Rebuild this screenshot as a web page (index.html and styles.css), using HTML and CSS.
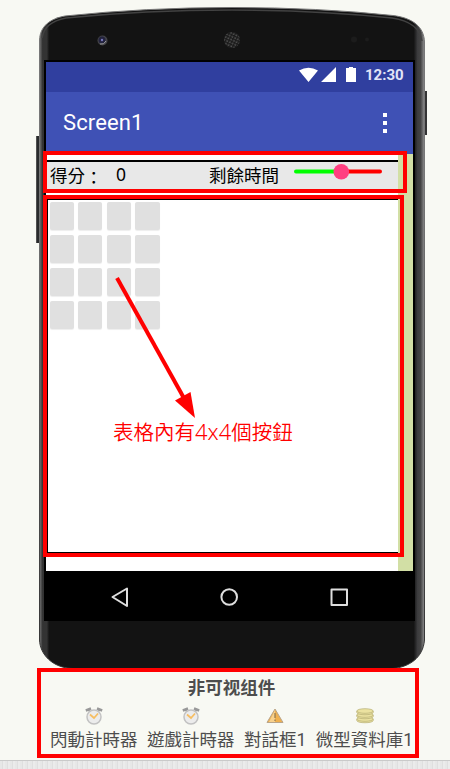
FILE: index.html
```html
<!DOCTYPE html>
<html lang="zh-Hant">
<head>
<meta charset="utf-8">
<title>Screen1</title>
<link rel="stylesheet" href="styles.css">
</head>
<body>
<main class="viewer">
  <section class="phone">
    <svg class="shell" viewBox="0 0 450 680" aria-hidden="true">
      <defs>
        <linearGradient id="edge"><stop offset="0" stop-color="#777"/><stop offset=".008" stop-color="#333"/><stop offset=".019" stop-color="#333"/><stop offset=".025" stop-color="#131313"/><stop offset=".972" stop-color="#131313"/><stop offset=".982" stop-color="#3c3c3e"/><stop offset=".99" stop-color="#444"/><stop offset="1" stop-color="#909090"/></linearGradient>
        <linearGradient id="rim" x2="0" y2="1"><stop offset="0" stop-color="#777"/><stop offset=".25" stop-color="#777"/><stop offset="1" stop-color="#333"/></linearGradient>
        <pattern id="mesh" width="3" height="3" patternUnits="userSpaceOnUse" patternTransform="rotate(25)"><rect width="3" height="3" fill="#1b1b1b"/><circle cx="1.2" cy="1.2" r=".9" fill="#555"/></pattern>
      </defs>
      <path d="M36 136h4v107h-4z" fill="#292b2c"/><path d="M36 136h1v107h-1z" fill="#505050"/>
      <path d="M424 91h3v44h-3z" fill="#343434"/>
      <path d="M39.500 40C40 27 49 19 65 16Q145 7.500 232 7.500T393 15.500C413 18 424 27 424.500 42V640C423 658 409 667 393 668.500H73C52 668 40 654 39.500 640Z" fill="url(#edge)" stroke="url(#rim)" stroke-width="1"/>
      <path d="M42 38C44 27 51 21 66 18Q145 10 232 10T392 18C412 21 420 29 422 41" fill="none" stroke="#424242" stroke-width="1.500"/>
      <circle cx="102.500" cy="40.500" r="5" fill="#444448"/><circle cx="102" cy="40" r="3.500" fill="#23233e"/><circle cx="102" cy="40" r="1.200" fill="#7777ba"/><path d="M100 44q4 1 6-3" stroke="#999" fill="none"/>
      <circle cx="232" cy="40" r="8" fill="url(#mesh)"/>
      <circle cx="354" cy="39.500" r="3" fill="#1c1c1c"/><circle cx="367" cy="39.500" r="2" fill="#1c1c1c"/>
    </svg>
    <div class="screen">
      <header class="status">
        <svg width="60" height="18" viewBox="0 0 60 18" fill="#fff" aria-hidden="true"><path d="M1 4.500Q10.500-1 20 4.500L10.500 16ZM23 16L38 1v15ZM48 2h3V1h4v1h3v14H48Z"/></svg>
        <span class="clock">12:30</span>
      </header>
      <div class="appbar"><span class="title">Screen1</span><span class="dots"><i></i><i></i><i></i></span></div>
      <div class="content">
        <div class="form">
          <div class="score-row">
            <span class="score-label">得分<span class="colon">：</span></span><span class="score">0</span><span class="time-label">剩餘時間</span>
            <svg class="slider" width="88" height="18" viewBox="0 0 88 18" aria-hidden="true"><path d="M2 8.500h44" stroke="#0f0" stroke-width="4" stroke-linecap="round"/><path d="M46 8.500h40" stroke="red" stroke-width="4" stroke-linecap="round"/><circle cx="47.300" cy="8.800" r="7.800" fill="#ff4081"/></svg>
          </div>
          <div class="table">
            <b></b><b></b><b></b><b></b><b></b><b></b><b></b><b></b>
            <b></b><b></b><b></b><b></b><b></b><b></b><b></b><b></b>
          </div>
        </div>
      </div>
      <nav class="navbar">
        <svg width="371" height="50" viewBox="0 0 371 50" fill="none" stroke="#dedede" stroke-width="2" stroke-linejoin="round" aria-hidden="true"><path d="M68.500 26L83 17.500v17.500Z"/><circle cx="185.200" cy="26" r="7.800"/><path d="M287.500 18.500h15.500v15.500h-15.500z"/></svg>
      </nav>
    </div>
  </section>

  <section class="components">
    <h2>非可视组件</h2>
    <div class="list">
      <div class="item"><svg class="icon" viewBox="0 0 18 18"><use href="#alarm"/></svg><span>閃動計時器</span></div>
      <div class="item"><svg class="icon" viewBox="0 0 18 18"><use href="#alarm"/></svg><span>遊戲計時器</span></div>
      <div class="item"><svg class="icon" viewBox="0 0 18 18"><path d="M9 2L1 15.500h16Z" fill="#efb04f" stroke="#b9a58a"/><path d="M9 3L3 15h6Z" fill="#f8d18d"/><path d="M9 6v5M9 12.500v1.500" stroke="#907850" stroke-width="1.200"/></svg><span>對話框1</span></div>
      <div class="item"><svg class="icon" viewBox="0 0 18 18" fill="#ebe2a0" stroke="#b5ad72" stroke-width=".7"><path d="M.8 12v1.500c0 3 16.400 3 16.400 0V12"/><ellipse cx="9" cy="12" rx="8.200" ry="2.300"/><path d="M.8 8v1.500c0 3 16.400 3 16.400 0V8"/><ellipse cx="9" cy="8" rx="8.200" ry="2.300"/><path d="M.8 4v1.500c0 3 16.400 3 16.400 0V4"/><ellipse cx="9" cy="4" rx="8.200" ry="2.300"/></svg><span>微型資料庫1</span></div>
    </div>
  </section>
</main>
<footer></footer>

<svg class="defs" width="0" height="0"><defs><g id="alarm"><path d="M.8 3.500L6 1.500M12 1.500l5.200 2" stroke="#999" stroke-width="2.500"/><path d="M3.500 3l2 2.500M14.500 3l-2 2.500" stroke="#999" fill="none" stroke-width="1.500"/><circle cx="9" cy="10" r="7" fill="#ececec" stroke="#c2c2c2" stroke-width="1.500"/><path d="M5 7.500L9 11l4-4.500" fill="none" stroke="#f6be62" stroke-width="1.700"/></g></defs></svg>
<div class="mark mark-score"></div>
<div class="mark mark-table"></div>
<div class="mark mark-components"></div>
<svg class="arrow" width="90" height="150" viewBox="0 0 90 150" aria-hidden="true"><path d="M7 8L75 130" stroke="red" stroke-width="4"/><path d="M85 148L65 130.500L80.500 122Z" fill="red"/></svg>
<p class="note">表格內有<span class="size">4x4</span>個按鈕</p>
</body>
</html>
```
FILE: styles.css
```css
* { box-sizing: border-box; }
body {
  position: relative;
  margin: 0;
  width: 450px;
  height: 769px;
  overflow: hidden;
  background: #f8f9f3;
  color: #000;
  font-family: Roboto, "Noto Sans CJK TC", sans-serif;
}
.viewer { height: 760px; }
.phone { position: relative; height: 668px; padding: 60px 0 0 44px; }
.shell { position: absolute; left: 0; top: 0; width: 450px; height: 680px; }
.screen { position: relative; width: 371px; height: 561px; padding: 2px 2px 0; background: #000; }
.status {
  display: flex;
  align-items: center;
  justify-content: flex-end;
  height: 30px;
  padding: 0 8px 4px 0;
  gap: 7px;
  background: #303f9f;
}
.clock { color: #e2e5f7; font-size: 15px; font-weight: 700; line-height: 18px; width: 40px; white-space: nowrap; }
.appbar {
  display: flex;
  align-items: center;
  justify-content: space-between;
  height: 62px;
  padding: 0 26px 1px 17px;
  background: #3f51b5;
}
.title { color: #fff; font-size: 22px; letter-spacing: .1px; }
.dots { display: grid; gap: 4px; }
.dots i { width: 4px; height: 4px; background: #fff; }
.content { height: 417px; background: #d2dfa5; }
.form { width: 352px; height: 417px; padding-top: 6px; background: #fff; }
.score-row {
  display: flex;
  height: 31px;
  padding-left: 4px;
  border-top: 2px solid #000;
  background: #e8e8e8;
  font-size: 17.5px;
  line-height: 29px;
  white-space: nowrap;
}
.score-label { width: 66px; }
.colon { position: relative; top: 2px; }
.score { width: 93px; font-family: "Noto Sans", sans-serif; font-size: 17.5px; line-height: 24px; }
.time-label { width: 85px; }
.table {
  display: grid;
  grid-template-columns: 24px 24px 24px 25px;
  grid-template-rows: repeat(4, 28px);
  column-gap: 4.3px;
  row-gap: 5px;
  height: 354px;
  margin: 8px 0 0 1px;
  padding: 2px 0 0 2px;
  border: solid #000;
  border-width: 1px 0 1px 1px;
}
.table b { border-radius: 2px; background: #e0e0e0; box-shadow: 0 1px 1px #eee; }
.navbar { height: 50px; margin: 0 -2px; }
.navbar svg { display: block; }
.slider { margin-top: 1px; }
.components { padding-top: 7px; color: #4d4d4d; }
h2 {
  margin: 0;
  padding-left: 13px;
  font: 700 17.5px/23px "Noto Sans CJK SC", sans-serif;
  text-align: center;
}
.list { display: flex; gap: 9.5px; padding: 9px 0 0 50px; }
.item { display: flex; flex-direction: column; align-items: center; font-size: 17.5px; line-height: 25px; white-space: nowrap; }
.icon { width: 18px; height: 18px; margin-bottom: 3px; }
footer {
  height: 9px;
  border-top: 1px solid #c9c9c9;
  background: repeating-linear-gradient(90deg, #e7e7e7 0 2px, #dfdfdf 2px 3px, #ebebeb 3px 5px);
}
.defs { position: absolute; }
.mark { position: absolute; border: 4px solid red; }
.mark-score { left: 43px; top: 151px; width: 364px; height: 42px; }
.mark-table { left: 43px; top: 195px; width: 361px; height: 362px; }
.mark-components { left: 37px; top: 668px; width: 382px; height: 90px; }
.arrow { position: absolute; left: 110px; top: 270px; }
.note {
  position: absolute;
  left: 113px;
  top: 416px;
  margin: 0;
  color: red;
  font: 350 20.5px/30px "Noto Sans CJK TC", sans-serif;
  white-space: nowrap;
}
.size { font-family: "Noto Sans", sans-serif; font-size: 22px; }
```
